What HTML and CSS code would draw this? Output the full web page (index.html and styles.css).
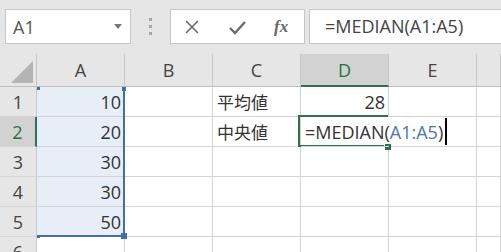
FILE: index.html
```html
<!DOCTYPE html>
<html lang="ja">
<head>
    <meta charset="UTF-8">
    <title>MEDIAN</title>
    <link rel="stylesheet" href="styles.css">
</head>
<body>
    <div class="toolbar">
        <div class="namebox">
            <span>A1</span>
            <svg class="drop" width="8" height="5" viewBox="0 0 8 5"><path d="M0 0h8L4 5z" fill="#777"/></svg>
        </div>
        <div class="grip"><i></i><i></i><i></i></div>
        <div class="fbuttons">
            <svg width="16" height="16" viewBox="0 0 16 16"><path d="M2 2L14 14M14 2L2 14" stroke="#6a6a6a" stroke-width="1.6" fill="none"/></svg>
            <svg width="18" height="16" viewBox="0 0 18 16"><path d="M2 9l5 5L17 3" stroke="#6a6a6a" stroke-width="2.4" fill="none"/></svg>
            <span class="fx">fx</span>
        </div>
        <div class="finput">=MEDIAN(A1:A5)</div>
    </div>

    <div class="sheet">
        <div class="corner"><span></span></div>
        <div class="colhead">A</div>
        <div class="colhead">B</div>
        <div class="colhead">C</div>
        <div class="colhead active">D</div>
        <div class="colhead">E</div>
        <div class="colhead"></div>

        <div class="rowhead">1</div>
        <div class="cell num ref">10</div>
        <div class="cell"></div>
        <div class="cell jp">平均値</div>
        <div class="cell num">28</div>
        <div class="cell"></div>
        <div class="cell"></div>

        <div class="rowhead active">2</div>
        <div class="cell num ref">20</div>
        <div class="cell"></div>
        <div class="cell jp">中央値</div>
        <div class="cell editing">=MEDIAN(<span class="refname">A1:A5</span>)<span class="caret"></span></div>
        <div class="cell"></div>
        <div class="cell"></div>

        <div class="rowhead">3</div>
        <div class="cell num ref">30</div>
        <div class="cell"></div>
        <div class="cell"></div>
        <div class="cell"></div>
        <div class="cell"></div>
        <div class="cell"></div>

        <div class="rowhead">4</div>
        <div class="cell num ref">30</div>
        <div class="cell"></div>
        <div class="cell"></div>
        <div class="cell"></div>
        <div class="cell"></div>
        <div class="cell"></div>

        <div class="rowhead">5</div>
        <div class="cell num ref">50</div>
        <div class="cell"></div>
        <div class="cell"></div>
        <div class="cell"></div>
        <div class="cell"></div>
        <div class="cell"></div>

        <div class="rowhead">6</div>
        <div class="cell"></div>
        <div class="cell"></div>
        <div class="cell"></div>
        <div class="cell"></div>
        <div class="cell"></div>
        <div class="cell"></div>

        <!-- referenced range A1:A5 -->
        <div class="range">
            <i class="h tl"></i><i class="h tr"></i><i class="h bl"></i><i class="h br"></i>
        </div>
        <!-- active cell D2 -->
        <div class="active-cell"><i class="handle"></i></div>
    </div>
</body>
</html>
```

FILE: styles.css
```css
body {
    margin: 0;
    width: 501px;
    height: 252px;
    overflow: hidden;
    background-color: #e6e6e6;
    font-family: "Open Sans", "Noto Sans CJK JP", sans-serif;
    color: #444;
}

.toolbar {
    display: flex;
    align-items: flex-start;
    height: 54px;
    padding-top: 9px;
    box-sizing: border-box;
}

.namebox {
    display: flex;
    align-items: center;
    justify-content: space-between;
    box-sizing: border-box;
    width: 126px;
    height: 35px;
    margin-left: 5px;
    padding: 0 8px 0 7px;
    background-color: #fff;
    border: 1px solid #c6c6c6;
    font-size: 18px;
    color: #555;
}

.grip {
    display: flex;
    flex-direction: column;
    align-items: center;
    gap: 4px;
    width: 39px;
    padding-top: 9px;
}

.grip i {
    width: 3px;
    height: 3px;
    background-color: #a6a6a6;
}

.fbuttons {
    display: flex;
    align-items: center;
    box-sizing: border-box;
    width: 135px;
    height: 35px;
    padding-left: 13px;
    gap: 28px;
    background-color: #fff;
    border: 1px solid #c6c6c6;
}

.fx {
    font-family: "Liberation Serif", serif;
    font-style: italic;
    font-weight: bold;
    font-size: 17px;
    color: #666;
}

.finput {
    flex: 1;
    box-sizing: border-box;
    height: 35px;
    margin-left: 4px;
    margin-right: -4px;
    padding-left: 15px;
    line-height: 33px;
    background-color: #fff;
    border: 1px solid #c6c6c6;
    font-size: 18px;
    color: #444;
}

.sheet {
    position: relative;
    display: grid;
    grid-template-columns: 37px repeat(5, 88px) 1fr;
    grid-template-rows: 33px repeat(6, 30px);
    background-color: #fff;
    height: 198px;
    overflow: hidden;
}

.corner, .colhead, .rowhead {
    background-color: #e6e6e6;
    box-sizing: border-box;
    border-right: 1px solid #c8c8c8;
    border-bottom: 1px solid #bdbdbd;
    display: flex;
    align-items: center;
    justify-content: center;
    font-size: 18px;
    color: #444;
}

.corner {
    align-items: flex-end;
    justify-content: flex-end;
    padding: 0 3px 3px 0;
}

.corner span {
    width: 0;
    height: 0;
    border-left: 22px solid transparent;
    border-bottom: 22px solid #b4b4b4;
}

.rowhead {
    border-bottom-color: #d4d4d4;
}

.colhead.active {
    background-color: #d2d2d2;
    color: #217346;
    border-bottom: 2px solid #30704f;
}

.rowhead.active {
    background-color: #d2d2d2;
    color: #217346;
    border-right: 2px solid #30704f;
}

.cell {
    box-sizing: border-box;
    border-right: 1px solid #d4d4d4;
    border-bottom: 1px solid #d4d4d4;
    padding: 0 4px;
    display: flex;
    align-items: center;
    font-size: 18px;
    color: #333;
    white-space: nowrap;
}

.cell.jp {
    font-size: 17px;
}

.cell.num {
    justify-content: flex-end;
    padding-right: 3px;
}

.cell.ref {
    background-color: #e8eef7;
}

.cell.editing {
    border-right: none;
    padding-left: 4px;
    overflow: visible;
    z-index: 4;
}

.refname {
    color: #4a76b5;
}

.caret {
    display: inline-block;
    flex-shrink: 0;
    width: 2px;
    height: 27px;
    margin-left: 2px;
    background-color: #000;
}

.range {
    position: absolute;
    left: 37px;
    top: 33px;
    width: 88px;
    height: 150px;
    box-sizing: border-box;
    border-right: 2px solid #416fa6;
    border-bottom: 2px solid #416fa6;
    z-index: 3;
}

.range .h {
    position: absolute;
    width: 4px;
    height: 4px;
    background-color: #416fa6;
}

.range .tl { left: 0; top: 0; width: 3px; height: 3px; }
.range .tr { right: -3px; top: 0; }
.range .bl { left: 0; bottom: -3px; width: 3px; height: 3px; }
.range .br { right: -4px; bottom: -4px; width: 6px; height: 6px; }

.active-cell {
    position: absolute;
    left: 298px;
    top: 61px;
    width: 90px;
    height: 32px;
    box-sizing: border-box;
    border-left: 2px solid #30704f;
    border-top: 2px solid #30704f;
    border-bottom: 2px solid #30704f;
    z-index: 3;
}

.handle {
    position: absolute;
    right: -3px;
    bottom: -5px;
    width: 6px;
    height: 6px;
    background-color: #30704f;
    border-left: 1px solid #fff;
}
```
